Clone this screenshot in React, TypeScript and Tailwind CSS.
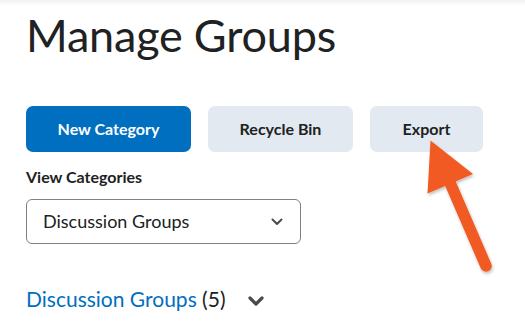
import React from 'react';

const font = { fontFamily: 'Lato, "Open Sans", sans-serif' };

const SmallChevron = () => (
  <svg width="12" height="8" viewBox="0 0 12 8" fill="none">
    <path d="M1.5 1.5 L6 6 L10.5 1.5" stroke="#494c4e" strokeWidth="2" strokeLinecap="round" strokeLinejoin="round" />
  </svg>
);

const BoldChevron = () => (
  <svg width="16" height="10" viewBox="0 0 16 10" fill="none">
    <path d="M2 2 L8 8 L14 2" stroke="#494c4e" strokeWidth="3.2" strokeLinecap="round" strokeLinejoin="round" />
  </svg>
);

// the orange call-out arrow pointing at Export
const Arrow = () => (
  <svg className="absolute left-0 top-0 pointer-events-none" width="525" height="327" viewBox="0 0 525 327">
    <defs>
      <filter id="shadow" x="-20%" y="-20%" width="140%" height="140%">
        <feDropShadow dx="1" dy="2" stdDeviation="1.5" floodColor="#000" floodOpacity="0.25" />
      </filter>
    </defs>
    <g filter="url(#shadow)" fill="#f15a24">
      <line x1="448" y1="178" x2="486" y2="266" stroke="#f15a24" strokeWidth="11.5" strokeLinecap="round" />
      <polygon points="430.5,140.5 473,174 427.5,193.5" />
    </g>
  </svg>
);

export default function App() {
  return (
    <div className="relative w-[525px] h-[327px] overflow-hidden bg-white text-[#202122]" style={font}>
      <div className="absolute left-0 top-0 w-full h-[6px] bg-gradient-to-b from-[#f2f2f2] to-white" />
      <div className="relative flex flex-col pl-[26px] pt-2">
        <h1 className="text-[45px] leading-[54px] font-normal tracking-[-0.2px]">Manage Groups</h1>

        <div className="mt-[44px] flex gap-[17px]">
          <button className="w-[165px] h-[46px] rounded-[7px] bg-[#006fbf] text-white text-[16px] font-bold">
            New Category
          </button>
          <button className="w-[145px] h-[46px] rounded-[7px] bg-[#e3e9f1] text-[16px] font-bold">
            Recycle Bin
          </button>
          <button className="w-[113px] h-[46px] rounded-[7px] bg-[#e3e9f1] text-[16px] font-bold">
            Export
          </button>
        </div>

        <label className="mt-[15px] text-[16px] leading-5 font-bold">View Categories</label>

        <div className="mt-[12px] w-[275px] h-[45px] rounded-[6px] border border-[#7c8184] flex items-center justify-between pl-[16px] pr-[17px]">
          <span className="text-[18px]">Discussion Groups</span>
          <SmallChevron />
        </div>

        <div className="mt-[41px] flex items-center">
          <span className="text-[21px] leading-7">
            <span className="text-[#006fbf]">Discussion Groups</span> (5)
          </span>
          <span className="ml-[22px] mt-[3px]">
            <BoldChevron />
          </span>
        </div>
      </div>
      <Arrow />
    </div>
  );
}
